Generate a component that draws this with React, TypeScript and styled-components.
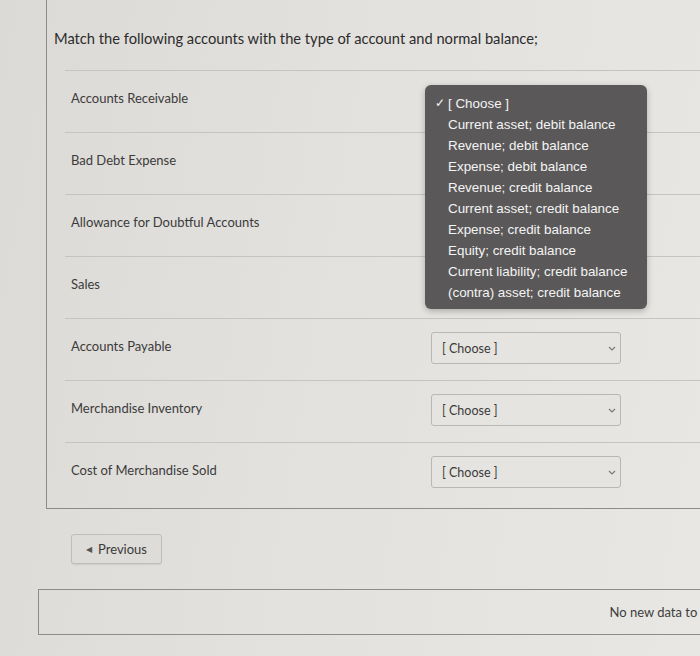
import styled, { createGlobalStyle } from "styled-components";

const GlobalStyle = createGlobalStyle`
  html, body {
    margin: 0;
    padding: 0;
    overflow: hidden;
    background: linear-gradient(100deg, #dcdad6 0%, #e3e1dd 45%, #e8e7e4 100%);
  }
  body {
    font-family: Lato, "Open Sans", sans-serif;
    color: #3a3a3a;
  }
`;

const Page = styled.div`
  width: 770px;
  height: 656px;
  display: flex;
  flex-direction: column;
`;

const QuestionPanel = styled.section`
  margin-left: 46px;
  border-left: 1px solid #8e8c89;
  border-bottom: 1px solid #8e8c89;
  padding: 27px 0 4px;
`;

const Title = styled.h2`
  margin: 0 0 21px 7px;
  font-size: 14.7px;
  line-height: 22px;
  font-weight: 400;
  color: #2c2c2c;
`;

const Row = styled.div`
  margin-left: 18px;
  border-top: 1px solid #c6c4c0;
  height: 61px;
  display: grid;
  grid-template-columns: 366px 190px;
  align-items: start;
`;

const Label = styled.div`
  padding: 17px 0 0 6px;
  font-size: 13px;
  line-height: 20px;
  color: #3b3b3b;
`;

const SelectWrap = styled.div`
  position: relative;
  margin-top: 13px;
`;

const SelectBox = styled.div`
  height: 32px;
  box-sizing: border-box;
  border: 1px solid #b9b7b3;
  border-radius: 3px;
  background: #e6e4e0;
  display: flex;
  align-items: center;
  justify-content: space-between;
  padding: 0 3px 0 10px;
  font-size: 12.5px;
  color: #3a3a3a;
`;

const Chevron = styled.svg`
  width: 10px;
  height: 7px;
`;

const Menu = styled.ul`
  position: absolute;
  top: 1px;
  left: -6px;
  width: 222px;
  margin: 0;
  padding: 8px 0 6px;
  list-style: none;
  background: #5a5858;
  border-radius: 6px;
  box-shadow: 0 2px 6px rgba(0, 0, 0, 0.25);
  z-index: 2;
`;

const MenuItem = styled.li<{ $checked?: boolean }>`
  position: relative;
  padding-left: 23px;
  height: 21px;
  line-height: 21px;
  font-family: "Liberation Sans", Arial, sans-serif;
  font-size: 13.4px;
  color: #f4f4f4;
  white-space: nowrap;

  &::before {
    content: ${(p) => (p.$checked ? '"✓"' : '""')};
    position: absolute;
    left: 10px;
    font-size: 12px;
  }
`;

const PrevButton = styled.button`
  align-self: flex-start;
  margin: 25px 0 0 71px;
  width: 91px;
  height: 30px;
  border: 1px solid #c0beba;
  border-radius: 3px;
  background: #dedcd8;
  box-shadow: 0 1px 1px rgba(0, 0, 0, 0.08);
  display: flex;
  align-items: center;
  justify-content: center;
  gap: 6px;
  font-family: Lato, sans-serif;
  font-size: 13px;
  color: #3a3a3a;
  padding: 0;
`;

const Arrow = styled.span`
  font-size: 8px;
  color: #555;
`;

const StatusBar = styled.div`
  margin: 25px 0 0 38px;
  height: 46px;
  box-sizing: border-box;
  border: 1px solid #8e8c89;
  border-right: none;
  display: flex;
  align-items: center;
  justify-content: flex-end;
  padding-right: 44px;
  font-size: 13px;
  color: #3d3d3d;
`;

const accounts = [
  "Accounts Receivable",
  "Bad Debt Expense",
  "Allowance for Doubtful Accounts",
  "Sales",
  "Accounts Payable",
  "Merchandise Inventory",
  "Cost of Merchandise Sold",
];

const options = [
  "[ Choose ]",
  "Current asset; debit balance",
  "Revenue; debit balance",
  "Expense; debit balance",
  "Revenue; credit balance",
  "Current asset; credit balance",
  "Expense; credit balance",
  "Equity; credit balance",
  "Current liability; credit balance",
  "(contra) asset; credit balance",
];

function App() {
  return (
    <Page>
      <GlobalStyle />
      <QuestionPanel>
        <Title>Match the following accounts with the type of account and normal balance;</Title>
        {accounts.map((name, i) => (
          <Row key={name}>
            <Label>{name}</Label>
            <SelectWrap>
              {i >= 4 && (
                <SelectBox>
                  <span>[ Choose ]</span>
                  <Chevron viewBox="0 0 10 7">
                    <path d="M2 2 L5 5 L8 2" fill="none" stroke="#7a7a7a" strokeWidth="1.2" />
                  </Chevron>
                </SelectBox>
              )}
              {i === 0 && (
                <Menu>
                  {options.map((opt, j) => (
                    <MenuItem key={opt} $checked={j === 0}>
                      {opt}
                    </MenuItem>
                  ))}
                </Menu>
              )}
            </SelectWrap>
          </Row>
        ))}
      </QuestionPanel>
      <PrevButton>
        <Arrow>◀</Arrow>
        Previous
      </PrevButton>
      <StatusBar>No new data to save</StatusBar>
    </Page>
  );
}

export default App;
